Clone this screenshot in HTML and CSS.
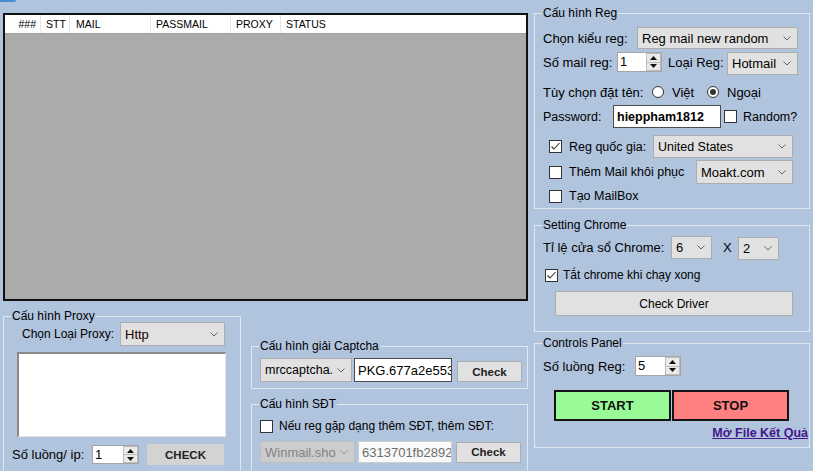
FILE: index.html
```html
<!DOCTYPE html>
<html lang="vi">
<head>
  <meta charset="UTF-8">
  <meta name="viewport" content="width=device-width, initial-scale=1.0">
  <title>Reg Mail Tool</title>
  <link rel="stylesheet" href="styles.css">
</head>
<body>
  <div class="tab-mark"></div>
  <main class="app">
    <section class="left">
      <div class="grid">
        <div class="grid-head">
          <div class="col c1">###</div>
          <div class="col c2">STT</div>
          <div class="col c3">MAIL</div>
          <div class="col c4">PASSMAIL</div>
          <div class="col c5">PROXY</div>
          <div class="col c6">STATUS</div>
        </div>
      </div>

      <div class="bottom">
        <fieldset class="box proxy">
          <legend>Cấu hình Proxy</legend>
          <div class="row proxy-type">
            <span class="lbl proxy-lbl">Chọn Loại Proxy:</span>
            <div class="combo proxy-combo">
              <span class="val http">Http</span>
              <svg class="arrow" width="8" height="5" viewBox="0 0 8 5"><path d="M.5.5 4 4 7.5.5" fill="none" stroke="#666"/></svg>
            </div>
          </div>
          <div class="textarea"></div>
          <div class="row proxy-threads">
            <span class="lbl threads-lbl">Số luồng/ ip:</span>
            <div class="spin proxy-spin">
              <span class="val">1</span>
              <div class="spin-btns">
                <i><svg width="7" height="4" viewBox="0 0 7 4"><path d="M0 4h7L3.5 0z"/></svg></i>
                <i><svg width="7" height="4" viewBox="0 0 7 4"><path d="M0 0h7L3.5 4z"/></svg></i>
              </div>
            </div>
            <button class="btn-flat">CHECK</button>
          </div>
        </fieldset>

        <div class="stack">
          <fieldset class="box captcha">
            <legend>Cấu hình giải Captcha</legend>
            <div class="row captcha-row">
              <div class="combo captcha-combo">
                <span class="val">mrccaptcha.com</span>
                <svg class="arrow" width="8" height="5" viewBox="0 0 8 5"><path d="M.5.5 4 4 7.5.5" fill="none" stroke="#666"/></svg>
              </div>
              <div class="text-input key-input"><span class="val">PKG.677a2e553f8b</span></div>
              <button class="btn btn-check">Check</button>
            </div>
          </fieldset>

          <fieldset class="box sdt">
            <legend>Cấu hình SĐT</legend>
            <div class="row sdt-check">
              <span class="checkbox"></span>
              <span class="chk-text">Nếu reg gặp dạng thêm SĐT, thêm SĐT:</span>
            </div>
            <div class="row sdt-row">
              <div class="combo disabled sdt-combo">
                <span class="val">Winmail.shop</span>
                <svg class="arrow" width="8" height="5" viewBox="0 0 8 5"><path d="M.5.5 4 4 7.5.5" fill="none" stroke="#9a9a9a"/></svg>
              </div>
              <div class="text-input disabled sdt-input"><span class="val">6313701fb2892a</span></div>
              <button class="btn btn-check sdt-btn">Check</button>
            </div>
          </fieldset>
        </div>
      </div>
    </section>

    <section class="right">
      <fieldset class="box reg">
        <legend>Cấu hình Reg</legend>
        <div class="row reg-type">
          <span class="lbl type-lbl">Chọn kiểu reg:</span>
          <div class="combo type-combo">
            <span class="val">Reg mail new random</span>
            <svg class="arrow" width="8" height="5" viewBox="0 0 8 5"><path d="M.5.5 4 4 7.5.5" fill="none" stroke="#666"/></svg>
          </div>
        </div>
        <div class="row reg-count">
          <span class="lbl count-lbl">Số mail reg:</span>
          <div class="spin count-spin">
            <span class="val">1</span>
            <div class="spin-btns">
              <i><svg width="7" height="4" viewBox="0 0 7 4"><path d="M0 4h7L3.5 0z"/></svg></i>
              <i><svg width="7" height="4" viewBox="0 0 7 4"><path d="M0 0h7L3.5 4z"/></svg></i>
            </div>
          </div>
          <span class="lbl kind-lbl">Loại Reg:</span>
          <div class="combo kind-combo">
            <span class="val">Hotmail</span>
            <svg class="arrow" width="8" height="5" viewBox="0 0 8 5"><path d="M.5.5 4 4 7.5.5" fill="none" stroke="#666"/></svg>
          </div>
        </div>
        <div class="row reg-name">
          <span class="lbl name-lbl">Tùy chọn đặt tên:</span>
          <span class="radio-opt first"><span class="radio"></span>Việt</span>
          <span class="radio-opt"><span class="radio on"></span>Ngoại</span>
        </div>
        <div class="row reg-pass">
          <span class="lbl pass-lbl">Password:</span>
          <div class="text-input pass-input"><span class="val">hieppham1812</span></div>
          <span class="checkbox random-box"></span>
          <span class="chk-text random-text">Random?</span>
        </div>
        <div class="row reg-country">
          <span class="checkbox on"><svg width="11" height="11" viewBox="0 0 11 11"><path d="M1.5 5.5 4 8l5.5-6" fill="none" stroke="#333" stroke-width="1.1"/></svg></span>
          <span class="chk-text country-text">Reg quốc gia:</span>
          <div class="combo country-combo">
            <span class="val">United States</span>
            <svg class="arrow" width="8" height="5" viewBox="0 0 8 5"><path d="M.5.5 4 4 7.5.5" fill="none" stroke="#666"/></svg>
          </div>
        </div>
        <div class="row reg-recovery">
          <span class="checkbox"></span>
          <span class="chk-text recovery-text">Thêm Mail khôi phục</span>
          <div class="combo recovery-combo">
            <span class="val">Moakt.com</span>
            <svg class="arrow" width="8" height="5" viewBox="0 0 8 5"><path d="M.5.5 4 4 7.5.5" fill="none" stroke="#666"/></svg>
          </div>
        </div>
        <div class="row reg-mailbox">
          <span class="checkbox"></span>
          <span class="chk-text">Tạo MailBox</span>
        </div>
      </fieldset>

      <fieldset class="box chrome">
        <legend>Setting Chrome</legend>
        <div class="row chrome-ratio">
          <span class="lbl ratio-lbl">Tỉ lệ cửa sổ Chrome:</span>
          <div class="combo ratio-combo">
            <span class="val">6</span>
            <svg class="arrow" width="8" height="5" viewBox="0 0 8 5"><path d="M.5.5 4 4 7.5.5" fill="none" stroke="#666"/></svg>
          </div>
          <span class="lbl times">X</span>
          <div class="combo ratio-combo second">
            <span class="val">2</span>
            <svg class="arrow" width="8" height="5" viewBox="0 0 8 5"><path d="M.5.5 4 4 7.5.5" fill="none" stroke="#666"/></svg>
          </div>
        </div>
        <div class="row chrome-close">
          <span class="checkbox on"><svg width="11" height="11" viewBox="0 0 11 11"><path d="M1.5 5.5 4 8l5.5-6" fill="none" stroke="#333" stroke-width="1.1"/></svg></span>
          <span class="chk-text close-text">Tắt chrome khi chạy xong</span>
        </div>
        <button class="btn driver-btn">Check Driver</button>
      </fieldset>

      <fieldset class="box controls">
        <legend>Controls Panel</legend>
        <div class="row threads">
          <span class="lbl reg-threads-lbl">Số luồng Reg:</span>
          <div class="spin threads-spin">
            <span class="val">5</span>
            <div class="spin-btns">
              <i><svg width="7" height="4" viewBox="0 0 7 4"><path d="M0 4h7L3.5 0z"/></svg></i>
              <i><svg width="7" height="4" viewBox="0 0 7 4"><path d="M0 0h7L3.5 4z"/></svg></i>
            </div>
          </div>
        </div>
        <div class="row run-btns">
          <button class="run start">START</button>
          <button class="run stop">STOP</button>
        </div>
        <div class="row result-link">
          <a href="#">Mở File Kết Quả</a>
        </div>
      </fieldset>
    </section>
  </main>
</body>
</html>
```

FILE: styles.css
```css
body{
  margin: 0;
  height: 471px;
  overflow: hidden;
  position: relative;
  background: #b0c4de;
  font-family: "Liberation Sans", Arial, sans-serif;
  font-size: 13px;
  color: #000;
}

.tab-mark{
  position: absolute;
  left: 0;
  top: 0;
  width: 16px;
  height: 2px;
  background: #4a8bd6;
  border-radius: 0 0 2px 0;
}

.app{
  display: flex;
  padding-left: 3px;
}

.left{
  width: 525px;
}

.right{
  width: 276px;
  margin-left: 6px;
}

/* data grid */
.grid{
  margin-top: 13px;
  height: 288px;
  box-sizing: border-box;
  border: 2px solid #111;
  background: #ababab;
}

.grid-head{
  display: flex;
  height: 18px;
  background: #fff;
  border-bottom: 1px solid #a0a0a0;
}

.col{
  box-sizing: border-box;
  border-right: 1px solid #e4e4e4;
  padding-left: 5px;
  font-size: 10.5px;
  line-height: 18px;
  white-space: nowrap;
}

.c1{ width: 36px; text-align: right; padding: 0 4px 0 0; }
.c2{ width: 29px; }
.c3{ width: 81px; padding-left: 6px; }
.c4{ width: 80px; }
.c5{ width: 50px; }
.c6{ flex: 1; border-right: none; }

/* group boxes */
.box{
  margin: 0;
  padding: 0 8px;
  border: 1px solid #e1e7ef;
  min-inline-size: 0;
  box-sizing: border-box;
}

.box legend{
  padding: 0 1px;
  margin-left: -1px;
  font-size: 12px;
  line-height: 14px;
}

.row{
  display: flex;
  align-items: center;
}

.lbl, .chk-text{
  white-space: nowrap;
  flex: none;
}

.chk-text{
  font-size: 12.5px;
  margin-left: 7px;
}

/* controls */
.combo{
  display: flex;
  align-items: center;
  box-sizing: border-box;
  height: 22px;
  padding-left: 4px;
  background: #e1e1e1;
  border: 1px solid #adadad;
  flex: none;
}

.combo .val{
  flex: 1;
  min-width: 0;
  overflow: hidden;
  white-space: nowrap;
}

.combo .arrow{
  flex: none;
  margin: 0 6px 0 4px;
}

.combo.disabled{
  background: #cccccc;
  border-color: #bfbfbf;
  color: #838383;
}

.text-input{
  display: flex;
  align-items: center;
  box-sizing: border-box;
  height: 24px;
  padding-left: 3px;
  background: #fff;
  border: 1px solid #4d4d4d;
  overflow: hidden;
  white-space: nowrap;
  flex: none;
}

.text-input.disabled{
  background: #fafafa;
  border-color: #cfcfcf;
  color: #6d6d6d;
}

.spin{
  display: flex;
  box-sizing: border-box;
  height: 20px;
  background: #fff;
  border: 1px solid #a5a5a5;
  flex: none;
}

.spin .val{
  flex: 1;
  padding-left: 2px;
  line-height: 18px;
}

.spin-btns{
  width: 15px;
  display: flex;
  flex-direction: column;
}

.spin-btns i{
  flex: 1;
  display: flex;
  align-items: center;
  justify-content: center;
  background: #eaeaea;
  border: 1px solid #bcbcbc;
}

.spin-btns i + i{
  border-top: none;
}

.spin-btns svg{
  fill: #111;
}

.checkbox{
  display: flex;
  align-items: center;
  justify-content: center;
  width: 13px;
  height: 13px;
  box-sizing: border-box;
  background: #fff;
  border: 1px solid #333;
  flex: none;
}

.radio{
  display: inline-flex;
  align-items: center;
  justify-content: center;
  width: 12px;
  height: 12px;
  box-sizing: border-box;
  border: 1px solid #333;
  border-radius: 50%;
  background: #fff;
  margin-right: 8px;
}

.radio.on::after{
  content: "";
  width: 6px;
  height: 6px;
  border-radius: 50%;
  background: #333;
}

.radio-opt{
  display: flex;
  align-items: center;
}

.btn{
  box-sizing: border-box;
  background: #e1e1e1;
  border: 1px solid #adadad;
  font-family: inherit;
  font-size: 12px;
  color: #000;
  padding: 0;
  flex: none;
}

.btn-check{
  width: 65px;
  height: 21px;
  font-weight: bold;
  font-size: 11.5px;
  color: #222;
}

.btn-flat{
  box-sizing: border-box;
  width: 77px;
  height: 21px;
  margin-left: 8px;
  background: #d3d3d3;
  border: none;
  padding: 0;
  font-family: inherit;
  font-weight: bold;
  font-size: 11.5px;
  color: #222;
}

/* Cấu hình Reg */
.reg{
  margin-top: 6px;
  padding-bottom: 3px;
}

.reg-type{ margin-top: 7px; height: 22px; }
.type-lbl{ width: 94px; }
.type-combo{ width: 161px; }

.reg-count{ margin-top: 3px; height: 23px; align-items: flex-start; }
.count-lbl{ width: 74px; line-height: 21px; }
.count-spin{ width: 45px; }
.kind-lbl{ width: 59px; margin-left: 6px; line-height: 21px; }
.kind-combo{ width: 71px; height: 23px; }

.reg-name{ margin-top: 8px; height: 18px; }
.name-lbl{ width: 109px; }
.radio-opt.first{ width: 55px; }

.reg-pass{ margin-top: 4px; height: 23px; }
.pass-lbl{ width: 70px; font-size: 12.5px; }
.pass-input{ width: 108px; height: 23px; font-weight: bold; font-size: 12.5px; }
.random-box{ margin-left: 3px; }
.random-text{ margin-left: 6px; }

.reg-country{ margin-top: 7px; height: 23px; padding-left: 6px; }
.country-text{ width: 84px; }
.country-combo{ width: 140px; height: 23px; font-size: 12.5px; }

.reg-recovery{ margin-top: 2px; height: 24px; padding-left: 6px; }
.recovery-text{ width: 127px; }
.recovery-combo{ width: 97px; height: 24px; }

.reg-mailbox{ margin-top: 3px; height: 18px; padding-left: 6px; }

/* Setting Chrome */
.chrome{
  margin-top: 9px;
  padding-bottom: 15px;
}

.chrome-ratio{ margin-top: 4px; height: 23px; }
.ratio-lbl{ width: 128px; }
.ratio-combo{ width: 41px; height: 23px; }
.ratio-combo.second{ margin-top: 2px; }
.times{ width: 15px; margin-left: 11px; }

.chrome-close{ margin-top: 9px; height: 14px; padding-left: 2px; }
.close-text{ margin-left: 5px; font-size: 12px; }

.driver-btn{
  display: block;
  width: 238px;
  height: 25px;
  margin: 9px 0 0 12px;
}

/* Controls Panel */
.controls{
  margin-top: 4px;
  padding-bottom: 7px;
}

.threads{ margin-top: 6px; height: 20px; }
.reg-threads-lbl{ width: 92px; }
.threads-spin{ width: 46px; }

.run-btns{ margin-top: 14px; padding-left: 11px; }

.run{
  box-sizing: border-box;
  width: 117px;
  height: 31px;
  border: 2px solid #141414;
  padding: 0;
  font-family: inherit;
  font-weight: bold;
  font-size: 13px;
  color: #111;
}

.start{
  background: #98fb98;
  margin-right: 1px;
}

.stop{
  background: #ff8080;
}

.result-link{
  margin: 5px -7px 0 0;
  height: 14px;
  justify-content: flex-end;
}

.result-link a{
  font-weight: bold;
  font-size: 12.5px;
  color: #44168c;
}

/* bottom area */
.bottom{
  display: flex;
  align-items: flex-start;
}

.proxy{
  width: 238px;
  margin-top: 8px;
  padding: 0 8px 20px 8px;
}

.proxy-type{ margin-top: -1px; height: 24px; }
.proxy-lbl{ width: 98px; margin-left: 10px; font-size: 12px; }
.proxy-combo{ width: 105px; height: 24px; }
.http{ color: #200; }

.textarea{
  box-sizing: border-box;
  width: 209px;
  height: 85px;
  margin: 6px 0 0 5px;
  background: #fff;
  border-top: 2px solid #8a8a8a;
  border-left: 2px solid #8a8a8a;
  border-right: 1px solid #e3e3e3;
  border-bottom: 1px solid #e3e3e3;
}

.proxy-threads{ margin-top: 7px; height: 21px; }
.threads-lbl{ width: 80px; }
.proxy-spin{ width: 47px; height: 19px; }

.stack{
  width: 277px;
  margin-left: 10px;
}

.captcha{
  margin-top: 38px;
  padding-bottom: 6px;
}

.captcha-row{ margin-top: 5px; height: 24px; font-size: 12.5px; }
.captcha-combo{ width: 92px; height: 24px; }
.key-input{ width: 98px; margin-left: 2px; font-size: 13px; }
.captcha-row .btn-check{ margin-left: 5px; align-self: flex-end; }

.sdt{
  margin-top: 8px;
  padding-bottom: 20px;
}

.sdt-check{ margin-top: 8px; height: 14px; }
.sdt-check .chk-text{ margin-left: 6px; font-size: 12px; }

.sdt-row{ margin-top: 8px; height: 22px; font-size: 13px; }
.sdt-combo{ width: 95px; height: 22px; }
.sdt-input{ width: 94px; height: 22px; margin-left: 3px; }
.sdt-btn{ margin-left: 4px; }
```
